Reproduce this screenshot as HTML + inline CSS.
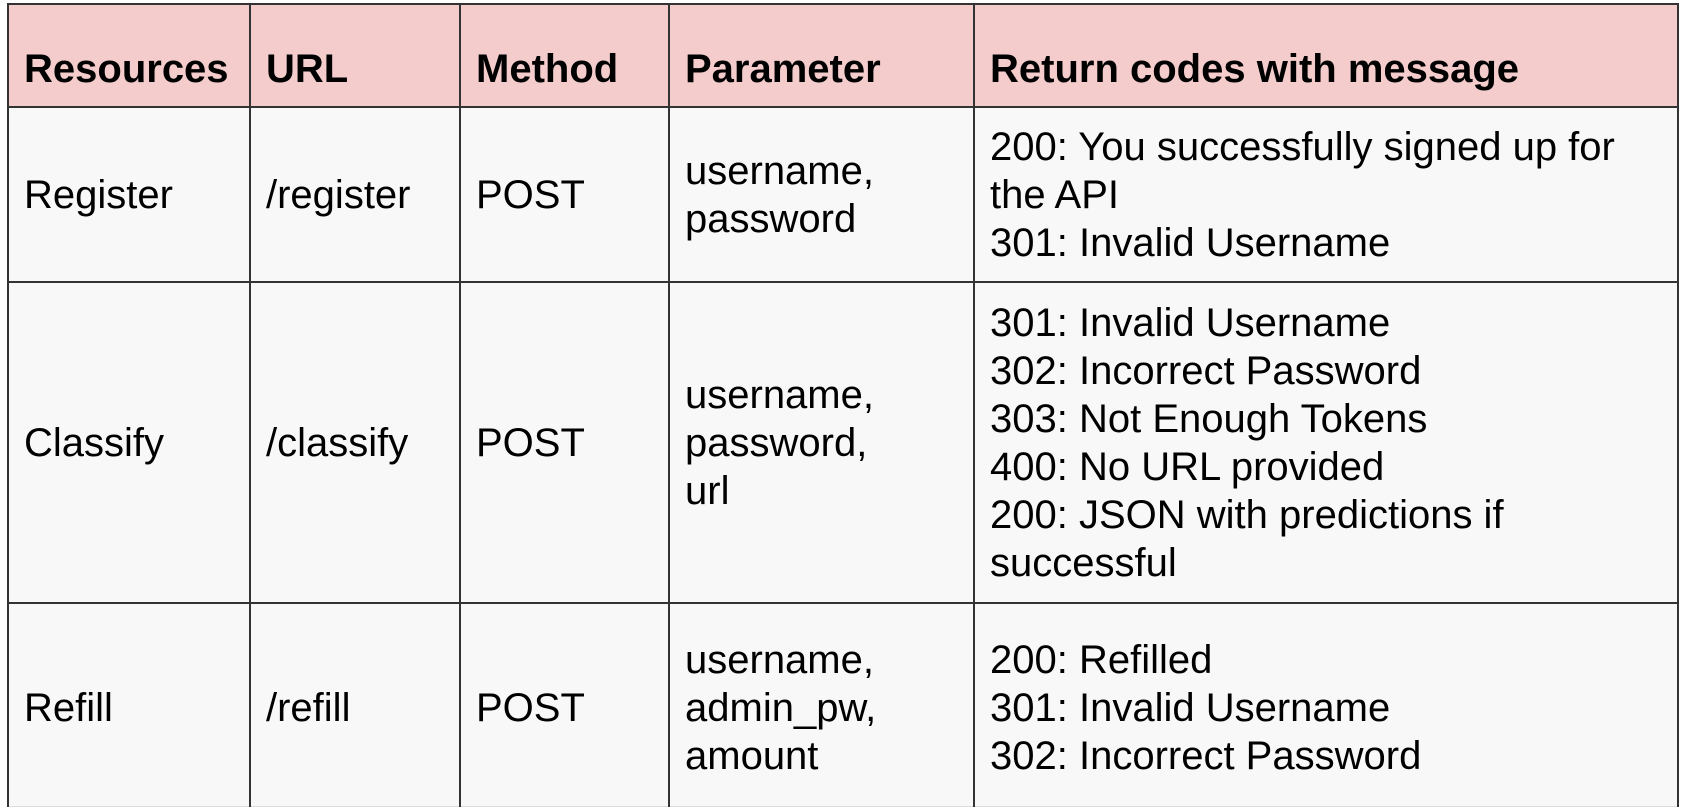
<!DOCTYPE html>
<html><head><meta charset="utf-8"><style>
html,body{margin:0;padding:0;background:#fff;width:1682px;height:807px;overflow:hidden}
table{position:absolute;left:7px;top:3px;border-collapse:collapse;font-family:"Liberation Sans",Arial,sans-serif;font-size:40px;line-height:48px;color:#000;table-layout:fixed}
td{border:2px solid #333;padding:0 15px;vertical-align:middle;background:#f8f8f8;box-sizing:border-box;white-space:nowrap;overflow:hidden}
tr.h td{background:#f4cccc;font-weight:bold;height:103px;padding-top:26px}
tr.last td{padding-top:6px;border-bottom:1px solid #ddd}
</style></head><body>
<table>
<colgroup><col style="width:242px"><col style="width:210px"><col style="width:209px"><col style="width:305px"><col style="width:704px"></colgroup>
<tr class="h"><td>Resources</td><td>URL</td><td>Method</td><td>Parameter</td><td>Return codes with message</td></tr>
<tr style="height:175px"><td>Register</td><td>/register</td><td>POST</td><td>username,<br>password</td><td>200: You successfully signed up for<br>the API<br>301: Invalid Username</td></tr>
<tr style="height:321px"><td>Classify</td><td>/classify</td><td>POST</td><td>username,<br>password,<br>url</td><td>301: Invalid Username<br>302: Incorrect Password<br>303: Not Enough Tokens<br>400: No URL provided<br>200: JSON with predictions if<br>successful</td></tr>
<tr class="last" style="height:203px"><td>Refill</td><td>/refill</td><td>POST</td><td>username,<br>admin_pw,<br>amount</td><td>200: Refilled<br>301: Invalid Username<br>302: Incorrect Password</td></tr>
</table>
</body></html>
